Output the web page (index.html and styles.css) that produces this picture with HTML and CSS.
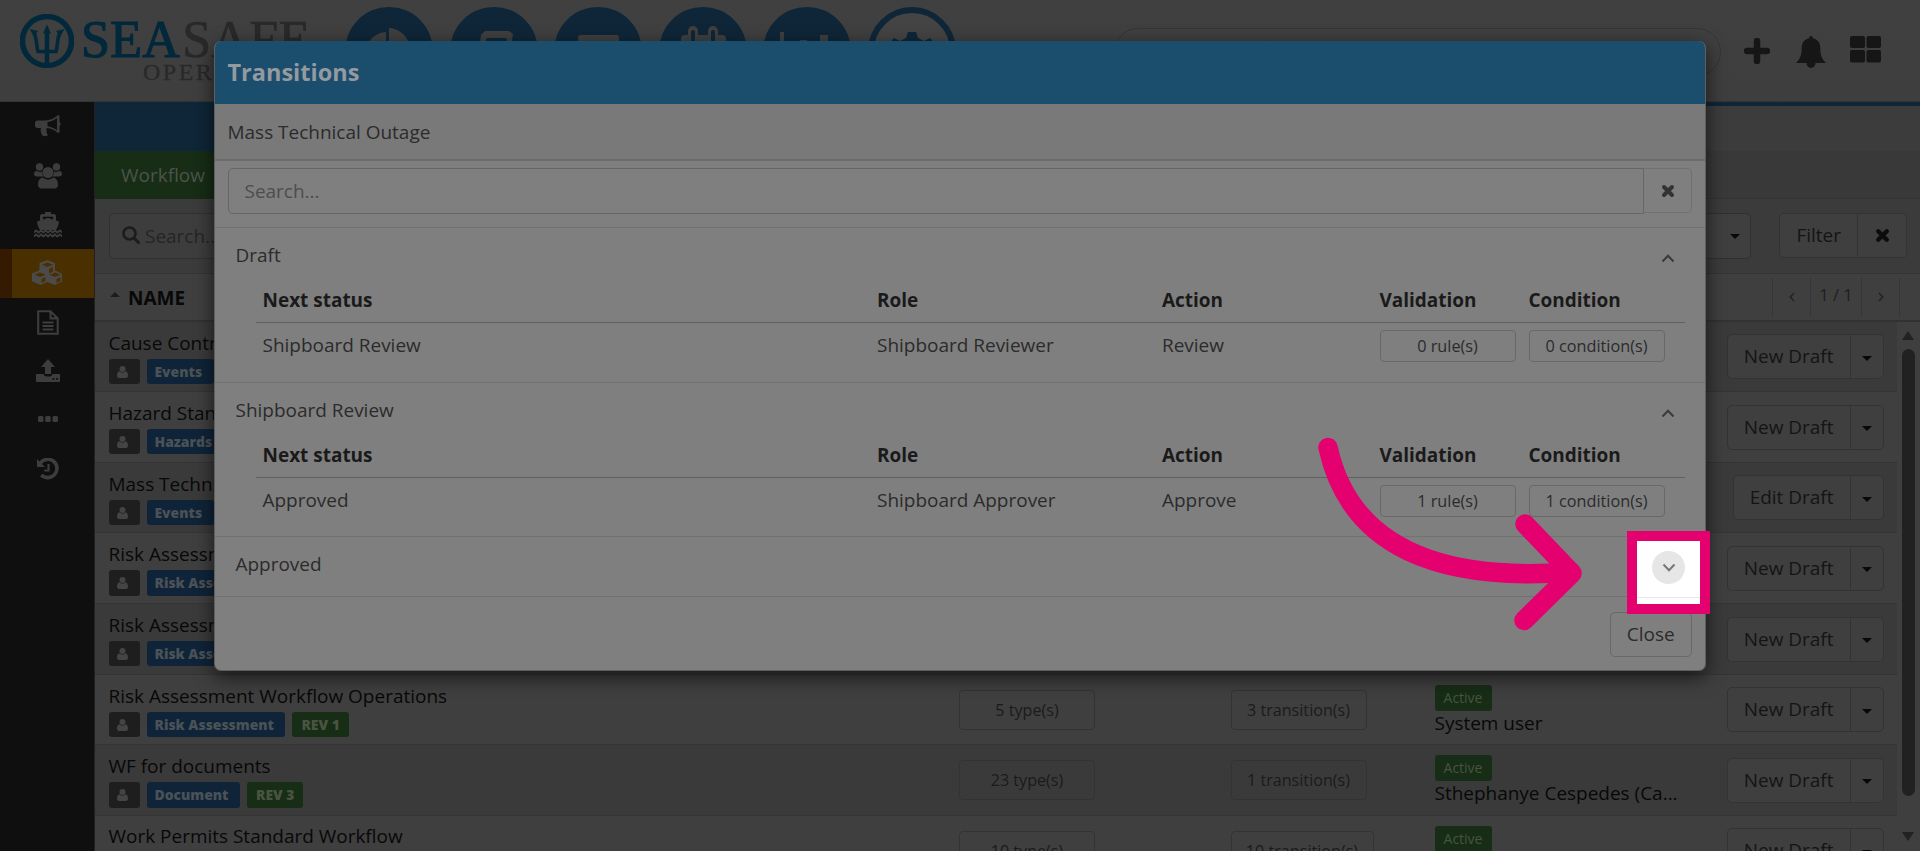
FILE: index.html
```html
<!DOCTYPE html>
<html lang="en">
<head>
<meta charset="utf-8">
<title>Seasafe Operations - Workflow</title>
<link rel="stylesheet" href="styles.css">
</head>
<body>
<svg class="defs" width="0" height="0">
  <symbol id="user" viewBox="0 0 11 12"><circle cx="5.5" cy="3" r="3"/><path d="M2.4 5.2a4 4 0 0 0 6.2 0C10.300 5.400 11 7.500 11 9.800 11 11 10.300 12 9.200 12H1.800C.7 12 0 11 0 9.800 0 7.500.7 5.400 2.400 5.200z"/></symbol>
  <symbol id="cross" viewBox="0 0 14 14"><path d="M3 3l8 8M11 3l-8 8" fill="none" stroke="currentColor" stroke-width="4" stroke-linecap="round"/></symbol>
</svg>
<div class="app">
  <header class="top">
    <div class="logo">
      <svg class="trident" viewBox="0 0 54 54" width="54" height="54"><circle cx="27" cy="27" r="24.500" fill="none" stroke="#02283b" stroke-width="5.500"/><path d="M27 17v33" fill="none" stroke="#02283b" stroke-width="4.500"/><path d="M13.500 18.500c3.500 4 2.500 12 4.500 19h18c2-7 1-15 4.500-19" fill="none" stroke="#02283b" stroke-width="3.600"/><path d="M27 10.500l4 9h-8zM9.500 15l8.500 2-4 5.500zM44.500 15l-8.500 2 4 5.500z" fill="#02283b"/></svg>
      <div class="wordmark"><div class="word"><span class="sea">SEA</span>SAFE</div><div class="oper">OPERATIONS</div></div>
    </div>
    <nav class="modules">
      <span class="mod"><svg viewBox="0 0 88 88"><path d="M41 25v23l15 16A22 22 0 1 1 41 25z"/><path d="M44 21a22 22 0 0 1 21 22H44z"/></svg></span>
      <span class="mod"><svg viewBox="0 0 88 88"><path d="M35 24h24l4 3-6 36H26l5-35z"/><path d="M38 33h17M36 42h15" class="cut"/></svg></span>
      <span class="mod"><svg viewBox="0 0 88 88"><rect x="24" y="28" width="41" height="34" rx="3"/></svg></span>
      <span class="mod"><svg viewBox="0 0 88 88"><rect x="22" y="28" width="45" height="38" rx="4"/><path d="M34 24v8M54 24v8" fill="none" stroke="#3f3f3f" stroke-width="10" stroke-linecap="round"/><path d="M34 25v8M54 25v8" class="cut"/></svg></span>
      <span class="mod"><svg viewBox="0 0 88 88"><path d="M17 25h4v36h42v4H17zM37 33h7v25h-7zM57 28h8v30h-8zM27 43h7v15h-7z"/></svg></span>
      <span class="mod ring"><svg viewBox="0 0 88 88"><path d="M40 25h8l2 6 6 3 6-3 6 7-6 6v8l6 6-6 6-7-2-7 4h-8l-7-4-7 2-6-6 6-6v-8l-6-6 6-7 6 3 6-3z"/></svg></span>
    </nav>
    <div class="pill"></div>
    <div class="tools">
      <svg viewBox="0 0 26 26" width="26" height="26"><path d="M13 3v20M3 13h20" fill="none" stroke="#161616" stroke-width="6.500" stroke-linecap="round"/></svg>
      <svg viewBox="0 0 30 32" width="30" height="32"><path d="M15 0c1.200 0 1.800 1 1.800 2.200 5 1 7.500 4.500 7.500 9.800 0 8 1.700 10.500 5.700 15H0c4-4.500 5.700-7 5.700-15 0-5.300 2.500-8.800 7.500-9.800C13.200 1 13.800 0 15 0zM10.500 27a4.500 5 0 0 0 9 0z"/></svg>
      <svg viewBox="0 0 31 27" width="31" height="27"><rect width="15" height="12" rx="2"/><rect x="16.500" width="14.500" height="12" rx="2"/><rect y="14" width="15" height="12.500" rx="2"/><rect x="16.500" y="14" width="14.500" height="12.500" rx="2"/></svg>
    </div>
  </header>
  <div class="body">
    <aside class="side">
      <span><svg viewBox="0 0 26 22" width="26" height="22"><path d="M2.500 5.500H10C15 5.500 19.500 3 23 0c1 0 1.500.5 1.500 1.500V7c1.500.8 1.500 3.200 0 4v5.500c0 1-.5 1.500-1.500 1.500-3.500-3-7-4.600-11-5-1.500 1.500.5 2.800-.5 4.500.5 1.300 1 1.700 1.500 2.500-1.500 1.500-4.500 1.500-5.800.3C6 18 5 15.500 6 13H2.500C1 13 0 12 0 10.500V8c0-1.500 1-2.500 2.500-2.500zm10 1.500v4.200c3.500.6 6.500 2 9.500 4V3c-3 2.200-6 3.500-9.500 4z" fill-rule="evenodd"/></svg></span>
      <span class="low"><svg viewBox="0 0 28 26" width="28" height="26"><circle cx="5.500" cy="4" r="3.700"/><circle cx="22.500" cy="4" r="3.700"/><path d="M3 8c3 1.500 4 .8 5 .5 0 2 .3 3.500 1.500 5H3C1 13.500 0 12.500 0 11c0-2 1-3.500 3-3zM25 8c-3 1.500-4 .8-5 .5 0 2-.3 3.500-1.500 5H25c2 0 3-1 3-2.500 0-2-1-3.500-3-3z"/><circle cx="14" cy="9.500" r="5.500"/><path d="M9 14.500c3 2.700 7 2.700 10 0 3.500 0 5 4 5 7.500 0 2-1.500 3.500-3.500 3.500h-13C5.500 25.500 4 24 4 22c0-3.500 1.500-7.500 5-7.500z"/></svg></span>
      <span class="low"><svg viewBox="0 0 28 26" width="28" height="26"><path d="M11 0h6v2h3c1 0 2 1 2 2v4.500l3 1c-.3 4-1.500 6-3 8.500H6c-1.500-2.500-2.700-4.500-3-8.500l3-1V4c0-1 1-2 2-2h3zM9 4.800v2.700l5-1.700 5 1.700V4.800z" fill-rule="evenodd"/><path d="M0 20.500l2-2 2.700 2 2.300-2 2.300 2 2.300-2 2.400 2 2.300-2 2.400 2 2.300-2 2.300 2 2.500-2 2.500 2M0 24.500l2-2 2.700 2 2.300-2 2.300 2 2.300-2 2.400 2 2.300-2 2.400 2 2.300-2 2.300 2 2.500-2 2.500 2" fill="none" stroke="currentColor" stroke-width="1.800"/></svg></span>
      <span class="on"><svg viewBox="0 0 32 26" width="32" height="26"><path d="M15.500 0L23 3v7.500l7 3.200v7.800L22.500 25 15.500 22 8.500 25 0 21.300V13.500l7.500-3.200V3zM15.500 2.500L10 4.700l5.500 2.300L21 4.700zM17 9v4.500l4-2V7zM8 12.500l-5.500 2.300L8 17l5.500-2.200zM9.500 19v4l4-2v-4zM23 12.500l-5.500 2.300L23 17l5.500-2.200zM24.500 19v4l4-2v-4z" fill-rule="evenodd"/></svg></span>
      <span class="low"><svg viewBox="0 0 22 25" width="22" height="25"><path d="M1.200 1.200H13.500l7.200 7.200v15.400H1.200zM13.500 1.200v7.200h7.200M5.500 12.500h11M5.500 16h11M5.500 19.500h11" fill="none" stroke="currentColor" stroke-width="2.100"/></svg></span>
      <span><svg viewBox="0 0 24 23" width="24" height="23"><path d="M12 0l7 8h-4v7H9V8H5zM1 15h6.500c.5 2 2 2.500 4.500 2.500s4-.5 4.500-2.500H23c.6 0 1 .4 1 1v6c0 .6-.4 1-1 1H1c-.6 0-1-.4-1-1v-6c0-.6.4-1 1-1zm15.500 4v1.800h1.800V19zm3.500 0v1.800h1.800V19z" fill-rule="evenodd"/></svg></span>
      <span class="high"><svg viewBox="0 0 20 6" width="20" height="6"><rect width="5.500" height="6" rx="1.500"/><rect x="7.200" width="5.500" height="6" rx="1.500"/><rect x="14.500" width="5.500" height="6" rx="1.500"/></svg></span>
      <span class="low"><svg viewBox="0 0 22 22" width="22" height="22"><path d="M3 5.500A9.200 9.200 0 1 1 4.300 17" fill="none" stroke="currentColor" stroke-width="3.600"/><path d="M0 1l8 8H0z"/><path d="M11.500 6v6.500H7.300" fill="none" stroke="currentColor" stroke-width="2.200"/></svg></span>
    </aside>
    <main class="main">
      <div class="bluebar"></div>
      <div class="tabs"><span class="tab">Workflow</span></div>
      <div class="filters">
        <div class="field"><svg viewBox="0 0 18 18" width="18" height="18"><circle cx="7.500" cy="7.500" r="6" fill="none" stroke="currentColor" stroke-width="2.600"/><path d="M12 12l4.500 4.500" stroke="currentColor" stroke-width="3" stroke-linecap="round"/></svg>Search...</div>
        <div class="select"><i class="caret"></i></div>
        <div class="split"><span class="lbl">Filter</span><span class="arr"><svg class="x" width="15" height="15"><use href="#cross"/></svg></span></div>
      </div>
      <div class="thead"><i class="up"></i><b>NAME</b><div class="pager"><span><svg class="pg" viewBox="0 0 6 10" width="6" height="10"><path d="M5 1L1.200 5 5 9"/></svg></span><span class="n">1 / 1</span><span><svg class="pg" viewBox="0 0 6 10" width="6" height="10"><path d="M1 1l3.800 4L1 9"/></svg></span></div></div>
      <div class="scroller">
        <div class="rows">
          <div class="row odd"><div class="c1"><div>Cause Control Workflow</div><div class="tags"><em><svg><use href="#user"/></svg></em><em class="b">Events</em></div></div><div class="split"><span class="lbl">New Draft</span><span class="arr"><i class="caret"></i></span></div></div>
          <div class="row"><div class="c1"><div>Hazard Standard Workflow</div><div class="tags"><em><svg><use href="#user"/></svg></em><em class="b">Hazards</em></div></div><div class="split"><span class="lbl">New Draft</span><span class="arr"><i class="caret"></i></span></div></div>
          <div class="row odd"><div class="c1"><div>Mass Technical Outage</div><div class="tags"><em><svg><use href="#user"/></svg></em><em class="b">Events</em></div></div><div class="split"><span class="lbl">Edit Draft</span><span class="arr"><i class="caret"></i></span></div></div>
          <div class="row"><div class="c1"><div>Risk Assessment</div><div class="tags"><em><svg><use href="#user"/></svg></em><em class="b">Risk Assessment</em></div></div><div class="split"><span class="lbl">New Draft</span><span class="arr"><i class="caret"></i></span></div></div>
          <div class="row odd"><div class="c1"><div>Risk Assessment</div><div class="tags"><em><svg><use href="#user"/></svg></em><em class="b">Risk Assessment</em></div></div><div class="split"><span class="lbl">New Draft</span><span class="arr"><i class="caret"></i></span></div></div>
          <div class="row"><div class="c1"><div>Risk Assessment Workflow Operations</div><div class="tags"><em><svg><use href="#user"/></svg></em><em class="b">Risk Assessment</em><em class="g">REV 1</em></div></div><div class="c2"><span class="box">5 type(s)</span></div><div class="c3"><span class="box">3 transition(s)</span></div><div class="c4"><span class="act">Active</span><div>System user</div></div><div class="split"><span class="lbl">New Draft</span><span class="arr"><i class="caret"></i></span></div></div>
          <div class="row odd"><div class="c1"><div>WF for documents</div><div class="tags"><em><svg><use href="#user"/></svg></em><em class="b">Document</em><em class="g">REV 3</em></div></div><div class="c2"><span class="box">23 type(s)</span></div><div class="c3"><span class="box">1 transition(s)</span></div><div class="c4"><span class="act">Active</span><div>Sthephanye Cespedes (Ca...</div></div><div class="split"><span class="lbl">New Draft</span><span class="arr"><i class="caret"></i></span></div></div>
          <div class="row last"><div class="c1"><div>Work Permits Standard Workflow</div></div><div class="c2"><span class="box">10 type(s)</span></div><div class="c3"><span class="box wide">10 transition(s)</span></div><div class="c4"><span class="act">Active</span></div><div class="split"><span class="lbl">New Draft</span><span class="arr"><i class="caret"></i></span></div></div>
        </div>
        <div class="bar"><i class="sup"></i><i class="thumb"></i><i class="sdn"></i></div>
      </div>
    </main>
  </div>
</div>

<div class="modal">
  <div class="mhead">Transitions</div>
  <div class="msub">Mass Technical Outage</div>
  <div class="msearch"><span class="minput">Search...</span><span class="mclear"><svg class="x" width="14" height="14"><use href="#cross"/></svg></span></div>
  <section class="sec">
    <div class="stitle">Draft<svg class="chev" viewBox="0 0 14 9" width="14" height="9"><path d="M1.500 7.500L7 1.800l5.500 5.700"/></svg></div>
    <div class="grid gh"><span>Next status</span><span>Role</span><span>Action</span><span>Validation</span><span>Condition</span></div>
    <div class="grid"><span>Shipboard Review</span><span>Shipboard Reviewer</span><span>Review</span><span class="mbox">0 rule(s)</span><span class="mbox">0 condition(s)</span></div>
  </section>
  <section class="sec">
    <div class="stitle">Shipboard Review<svg class="chev" viewBox="0 0 14 9" width="14" height="9"><path d="M1.500 7.500L7 1.800l5.500 5.700"/></svg></div>
    <div class="grid gh"><span>Next status</span><span>Role</span><span>Action</span><span>Validation</span><span>Condition</span></div>
    <div class="grid"><span>Approved</span><span>Shipboard Approver</span><span>Approve</span><span class="mbox">1 rule(s)</span><span class="mbox">1 condition(s)</span></div>
  </section>
  <section class="sec short"><div class="stitle">Approved</div></section>
  <div class="mfoot"><span class="close">Close</span></div>
</div>

<div class="spot"><span class="dot"><svg class="chev" viewBox="0 0 14 9" width="14" height="9"><path d="M1.500 1.500L7 7.200l5.500-5.700"/></svg></span></div>
<svg class="arrow" viewBox="1310 430 280 206" width="280" height="206"><path d="M1328 447.500C1350 548 1440 582 1571 572" stroke-width="19.500"/><path d="M1525 524l47 49.300-48 47.200" stroke-width="19.500"/></svg>
</body>
</html>
```

FILE: styles.css
```css
* { box-sizing: border-box; }
html, body { margin: 0; height: 851px; overflow: hidden; }
body { width: 1920px; position: relative; background: #3f3f3f; font-family: "Open Sans", sans-serif; font-size: 18.980px; line-height: 26px; color: #080808; }
em, i { font-style: normal; display: block; }
.defs { display: block; height: 0; }
.app { height: 851px; display: flex; flex-direction: column; }
.top { height: 102px; flex: none; display: flex; align-items: flex-start; background: linear-gradient(#404040, #3e3e3e); border-bottom: 1px solid #343434; }
.logo { width: 345px; padding: 13.500px 0 0 20px; display: flex; }
.trident { flex: none; }
.wordmark { margin-left: 7px; font-family: "Liberation Serif", serif; color: #292929; }
.word { font-size: 52px; line-height: 51px; height: 51px; margin-top: 0; white-space: nowrap; letter-spacing: .3px; -webkit-text-stroke: .6px currentColor; }
.word .sea { color: #02283b; margin-right: 2px; -webkit-text-stroke: 1.2px #02283b; }
.oper { font-size: 24px; letter-spacing: 2.500px; line-height: 24px; margin: -5px 0 0 62px; -webkit-text-stroke: .3px currentColor; }
.modules { display: flex; gap: 16.600px; padding-top: 7px; }
.mod { width: 88px; height: 88px; border-radius: 50%; background: #0f2638; }
.mod svg { display: block; width: 88px; height: 88px; fill: #3f3f3f; }
.mod .cut { fill: none; stroke: #0f2638; stroke-width: 4; stroke-linecap: round; }
.ring { background: #444; border: 6px solid #0f2638; }
.ring svg { margin: -6px; fill: #0f2638; }
.pill { margin: 28px 0 0 158px; width: 607px; height: 48px; border: 1px solid #353535; border-radius: 24px; flex: none; }
.tools { display: flex; align-items: center; margin: 35px 0 0 23px; height: 32px; fill: #161616; }
.tools svg { display: block; }
.tools svg:nth-child(2) { margin: 2px 24px 0 26.500px; }
.tools svg:nth-child(3) { margin-top: -4px; }
.body { flex: 1; display: flex; min-height: 0; }
.side { width: 94px; flex: none; background: #0f0f0f; color: #3d3d3d; fill: #3d3d3d; }
.side span { height: 48.850px; display: flex; align-items: center; justify-content: center; padding-left: 1px; }
.side .low { padding-top: 2px; }
.side .high { padding-bottom: 2px; }
.side .on { background: #4a2f00; border-left: 12px solid #331a00; padding-right: 12px; height: 49px; color: #4b4b4b; fill: #4b4b4b; }
.main { flex: 1; min-width: 0; border-left: 1px solid #222; display: flex; flex-direction: column; }
.bluebar { height: 49px; flex: none; border-top: 4px solid #0f2638; background: linear-gradient(90deg, #0f2638 800px, #3c3c3c 800px); }
.tabs { height: 48px; flex: none; background: #393939; border-bottom: 1px solid #343434; }
.tab { display: block; width: 160px; height: 48px; padding: 11px 0 0 26px; background: #172d16; color: #4c5349; }
.filters { height: 75px; flex: none; display: flex; align-items: flex-start; padding: 14px 13px 0 14px; background: #3b3b3b; border-bottom: 1px solid #353535; }
.field { width: 700px; height: 46px; border: 1px solid #313131; border-radius: 5px; padding: 0 12px; display: flex; align-items: center; color: #252525; background: #3d3d3d; }
.field svg { color: #1c1c1c; margin: -2px 5px 0 0; }
.select { margin-left: auto; width: 130px; height: 46px; border: 1px solid #303030; border-radius: 5px; display: flex; align-items: center; justify-content: flex-end; padding-right: 10px; background: #3f3f3f; }
.select .caret { margin-top: 1px; }
.filters .split { margin: 0 0 0 28px; }
.caret { border: 5px solid transparent; border-top-color: #080808; border-bottom: 0; }
.x { display: block; color: #0c0c0c; overflow: visible; }
.split { height: 45px; flex: none; display: flex; border: 1px solid #333; border-radius: 5px; background: #3f3f3f; color: #141414; }
.split .lbl { padding: 8px 16px 0; }
.split .arr { width: 33px; border-left: 1px solid #333; display: flex; align-items: center; justify-content: center; }
.split .arr .caret { margin-top: 3px; }
.filters .split .arr { width: 49px; }
.thead { height: 47.500px; flex: none; display: flex; align-items: center; padding-left: 15px; border-bottom: 2px solid #323232; background: #3f3f3f; }
.thead b { margin-top: 2px; }
.up { border: 5px solid transparent; border-bottom-color: #1c1c1c; border-top: 0; margin: -4px 8px 0 0; }
.pager { margin: 0 20px 0 auto; height: 38px; display: flex; border-right: 1px solid #353535; color: #1e1e1e; }
.pager span { width: 38px; border-left: 1px solid #353535; display: flex; align-items: center; justify-content: center; }
.pager .n { width: 51px; font-size: 16.500px; padding-bottom: 3px; }
.pg { fill: none; stroke: #222; stroke-width: 1.500; }
.scroller { flex: 1; min-height: 0; display: flex; overflow: hidden; }
.rows { flex: 1; }
.row { height: 70.640px; position: relative; display: flex; padding: 0 13.500px 0 13.500px; border-bottom: 1px solid #343434; background: #3f3f3f; white-space: nowrap; }
.odd { background: #3a3a3a; }
.last .c1 { padding-top: 7px; }
.c1 { width: 850.500px; padding-top: 8px; }
.tags { display: flex; gap: 7px; margin-top: 3px; }
.tags em { height: 25.300px; min-width: 31px; border-radius: 3px; background: #1e1e1e; color: #4a5157; font-weight: 800; font-size: 13.900px; line-height: 25px; }
.tags svg { width: 11px; height: 12px; margin: 7px 0 0 8px; display: block; fill: #444; }
.tags .b { background: #0f2438; padding: 0 11.500px 0 8px; }
.tags .g { background: #172d16; padding: 0 9px; color: #48543f; }
.c2 { width: 271.500px; padding-top: 15px; }
.c3 { width: 204px; padding-top: 15px; }
.c4 { padding-top: 10px; }
.c4 div { margin-top: -1px; }
.box { display: inline-block; min-width: 136px; height: 40px; border: 1px solid #333; border-radius: 4px; text-align: center; line-height: 39px; font-size: 16.150px; padding: 0 13px; color: #1b1b1b; }
.wide { min-width: 143px; }
.act { display: block; width: 57px; height: 26px; border-radius: 3px; background: #172d16; color: #48543f; text-align: center; font-size: 14px; }
.row .split { margin: 12.500px 0 0 auto; }
.bar { width: 23px; padding: 9px 0 0 5px; background: #3f3f3f; display: flex; flex-direction: column; }
.sup, .sdn { width: 12px; border: 6px solid transparent; }
.sup { border-bottom: 9px solid #222; border-top: 0; }
.thumb { width: 13px; height: 447px; margin: 9px 0 36px; border-radius: 7px; background: #212121; flex: none; }
.sdn { border-top: 9px solid #222; border-bottom: 0; }

.modal { position: absolute; left: 214px; top: 41px; width: 1492px; height: 630px; border-radius: 7px; background: #7f7f7f; border: 1px solid #5f5f5f; border-top: 0; box-shadow: 0 6px 19px rgba(0, 0, 0, .62); color: #2b2b2b; overflow: hidden; }
.mhead { height: 63px; background: #1b4d6d; color: #949a9f; font-size: 23.500px; font-weight: 700; line-height: 63px; margin: 0 -1px; padding-left: 13.500px; }
.msub { height: 57px; background: #797979; border-bottom: 2px solid #6c6c6c; padding: 14.500px 12.500px 0; }
.msearch { height: 67px; padding: 7px 13px 0 12.500px; display: flex; border-bottom: 1px solid #727272; }
.minput { flex: 1; height: 46px; border: 1px solid #666; border-radius: 5px 0 0 5px; padding: 9px 16px; color: #4d4d4d; }
.mclear { width: 48px; height: 45px; border: 1px solid #707070; border-left: 0; border-radius: 0 5px 5px 0; display: flex; align-items: center; justify-content: center; }
.mclear .x { color: #333; }
.sec { height: 154.500px; border-bottom: 1px solid #727272; padding: 0 20px 0 40.500px; }
.short { height: 60px; }
.stitle { height: 50px; padding-top: 14px; margin-left: -20px; display: flex; justify-content: space-between; }
.chev { fill: none; stroke: #3b3b3b; stroke-width: 2; margin: 12px 10px 0 0; }
.grid { display: grid; grid-template-columns: 614.500px 285px 217.500px 149px 149px; padding-left: 7px; height: 52px; align-items: start; padding-top: 9px; }
.gh { font-weight: 700; color: #1a1a1a; height: 45px; border-bottom: 1px solid #606060; }
.mbox { width: 136px; height: 32px; margin-top: -2px; border: 1px solid #686868; border-radius: 4px; text-align: center; font-size: 16.250px; line-height: 30px; }
.mfoot { padding: 15px 13px 0; display: flex; justify-content: flex-end; }
.close { width: 82.500px; height: 45px; border: 1px solid #686868; border-radius: 5px; text-align: center; line-height: 42px; }

.spot { position: absolute; left: 1627px; top: 531px; width: 83px; height: 83px; border: 10px solid #e4006f; background: linear-gradient(#fff 56px, #e8e8e8 56px, #e8e8e8 57px, #fff 57px); padding: 10px 0 0 15px; }
.dot { width: 33px; height: 33px; border-radius: 50%; background: #e6e6e6; display: flex; align-items: center; justify-content: center; }
.spot .chev { margin: -1px 0 0; stroke: #777; }
.arrow { position: absolute; left: 1310px; top: 430px; fill: none; stroke: #e4006f; stroke-linecap: round; stroke-linejoin: round; }
```
